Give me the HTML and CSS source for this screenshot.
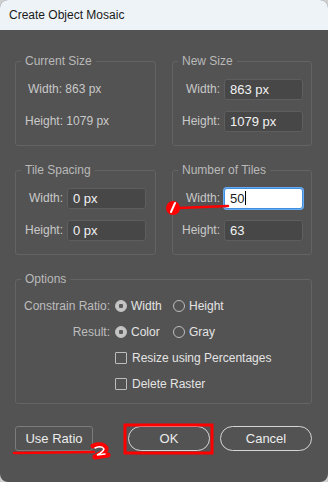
FILE: index.html
```html
<!DOCTYPE html>
<html lang="en">

<head>
    <meta charset="UTF-8">
    <meta name="viewport" content="width=device-width, initial-scale=1.0">
    <title>Create Object Mosaic</title>
    <link rel="stylesheet" href="styles.css">
</head>

<body>
    <div class="window">
        <div class="titlebar">Create Object Mosaic</div>

        <div class="content">
            <div class="pair">
                <fieldset class="group">
                    <legend>Current Size</legend>
                    <div class="info info-width">Width: 863 px</div>
                    <div class="info">Height: 1079 px</div>
                </fieldset>

                <fieldset class="group">
                    <legend>New Size</legend>
                    <div class="field">
                        <label>Width:</label>
                        <div class="input">863 px</div>
                    </div>
                    <div class="field">
                        <label>Height:</label>
                        <div class="input">1079 px</div>
                    </div>
                </fieldset>
            </div>

            <div class="pair second">
                <fieldset class="group">
                    <legend>Tile Spacing</legend>
                    <div class="field">
                        <label>Width:</label>
                        <div class="input">0 px</div>
                    </div>
                    <div class="field">
                        <label>Height:</label>
                        <div class="input">0 px</div>
                    </div>
                </fieldset>

                <fieldset class="group">
                    <legend>Number of Tiles</legend>
                    <div class="field">
                        <label>Width:</label>
                        <div class="input focused">50<span class="caret"></span></div>
                    </div>
                    <div class="field">
                        <label>Height:</label>
                        <div class="input">63</div>
                    </div>
                </fieldset>
            </div>

            <fieldset class="group options">
                <legend>Options</legend>
                <div class="opt-row">
                    <span class="opt-label">Constrain Ratio:</span>
                    <span class="choice"><span class="radio checked"></span>Width</span>
                    <span class="choice"><span class="radio"></span>Height</span>
                </div>
                <div class="opt-row">
                    <span class="opt-label">Result:</span>
                    <span class="choice"><span class="radio checked"></span>Color</span>
                    <span class="choice"><span class="radio"></span>Gray</span>
                </div>
                <div class="opt-row">
                    <span class="opt-label"></span>
                    <span class="choice wide"><span class="check"></span>Resize using Percentages</span>
                </div>
                <div class="opt-row">
                    <span class="opt-label"></span>
                    <span class="choice wide"><span class="check"></span>Delete Raster</span>
                </div>
            </fieldset>

            <div class="buttons">
                <button class="btn btn-ratio">Use Ratio</button>
                <button class="btn btn-pill btn-ok">OK</button>
                <button class="btn btn-pill btn-cancel">Cancel</button>
            </div>
        </div>

        <!-- red marks drawn on top of the screenshot -->
        <svg class="marks" width="328" height="482" viewBox="0 0 328 482">
            <line x1="179" y1="208" x2="228" y2="206" stroke="#ff0000" stroke-width="2.5" stroke-linecap="round" />
            <circle cx="173" cy="208" r="7" fill="#ff0000" />
            <line x1="171" y1="212" x2="175" y2="203" stroke="#ffffff" stroke-width="2" stroke-linecap="round" />

            <path d="M14 453 L94 452" stroke="#ff0000" stroke-width="2.5" stroke-linecap="round" fill="none" />
            <path d="M93 446 Q102 443 106 448 Q107 451 100 454 L95 457 L108 455" stroke="#ff0000" stroke-width="5" stroke-linecap="round" stroke-linejoin="round" fill="none" />
            <path d="M95 448 Q102 445 104 449 Q103 452 97 455 L105 454" stroke="#ffffff" stroke-width="1.5" stroke-linecap="round" fill="none" />

            <rect x="125" y="425" width="87" height="28" stroke="#ff0000" stroke-width="3" fill="none" />
        </svg>
    </div>
</body>

</html>
```

FILE: styles.css
```css
html,
body {
    margin: 0;
    padding: 0;
    background: #cfcfcf;
}

body {
    font-family: "Liberation Sans", Arial, sans-serif;
    font-size: 12px;
}

.window {
    position: relative;
    width: 328px;
    height: 482px;
    background: #535353;
    border-radius: 8px;
    overflow: hidden;
}

.titlebar {
    height: 30px;
    line-height: 30px;
    padding-left: 9px;
    background: #eef3f8;
    color: #1a1a1a;
}

.content {
    padding: 24px 16px 0 15px;
}

.pair {
    display: grid;
    grid-template-columns: 141px 140px;
    column-gap: 16px;
}

.pair.second {
    margin-top: 17px;
}

.group {
    margin: 0;
    min-width: 0;
    padding: 11px 9px 13px 8px;
    border: 1px solid #646464;
    border-radius: 3px;
    display: flex;
    flex-direction: column;
    gap: 11px;
}

.group legend {
    margin-left: -3px;
    padding: 0 4px;
    line-height: 14px;
    color: #b9b9b9;
}

.info {
    height: 21px;
    line-height: 21px;
    color: #c9c9c9;
    padding-left: 1px;
}

.info-width {
    padding-left: 4px;
}

.field {
    display: grid;
    grid-template-columns: 39px 79px;
    column-gap: 4px;
    height: 21px;
}

.field label {
    line-height: 21px;
    text-align: right;
    color: #c9c9c9;
}

.input {
    box-sizing: border-box;
    height: 21px;
    line-height: 19px;
    padding-left: 5px;
    background: #474747;
    border: 1px solid #5e5e5e;
    border-radius: 3px;
    color: #f2f2f2;
    font-size: 13px;
}

.input.focused {
    background: #ffffff;
    border: 1px solid #3d8fe0;
    box-shadow: 0 0 0 1px #6aaaf0;
    color: #222222;
}

.caret {
    display: inline-block;
    width: 1px;
    height: 14px;
    margin-left: 1px;
    vertical-align: -2px;
    background: #000000;
}

.options {
    margin-top: 17px;
    padding: 9px 9px 8px 8px;
    gap: 4px;
}

.opt-row {
    display: flex;
    align-items: center;
    height: 22px;
    color: #c9c9c9;
}

.opt-label {
    flex-shrink: 0;
    width: 86px;
    margin-right: 5px;
    text-align: right;
    white-space: nowrap;
    color: #bdbdbd;
}

.choice {
    display: flex;
    align-items: center;
    flex-shrink: 0;
    width: 58px;
    white-space: nowrap;
    color: #e4e4e4;
}

.choice.wide {
    width: auto;
}

.radio {
    box-sizing: border-box;
    flex-shrink: 0;
    width: 12px;
    height: 12px;
    margin-right: 4px;
    border: 1px solid #bdbdbd;
    border-radius: 50%;
}

.radio.checked {
    background: radial-gradient(circle, #5a5a5a 0 2px, #c4c4c4 2.5px);
    border-color: #c4c4c4;
}

.check {
    box-sizing: border-box;
    flex-shrink: 0;
    width: 12px;
    height: 12px;
    margin-right: 5px;
    border: 1px solid #bdbdbd;
    border-radius: 1px;
}

.buttons {
    display: flex;
    margin-top: 22px;
}

.btn {
    box-sizing: border-box;
    height: 25px;
    padding: 0;
    background: transparent;
    font-family: inherit;
    font-size: 13px;
    color: #ececec;
    cursor: pointer;
}

.btn-ratio {
    width: 78px;
    border: 1px solid #7c7c7c;
    border-radius: 3px;
}

.btn-pill {
    border: 1px solid #d6d6d6;
    border-radius: 13px;
}

.btn-ok {
    width: 82px;
    margin-left: 35px;
}

.btn-cancel {
    width: 92px;
    margin-left: 10px;
}

.marks {
    position: absolute;
    left: 0;
    top: 0;
    pointer-events: none;
}
```
